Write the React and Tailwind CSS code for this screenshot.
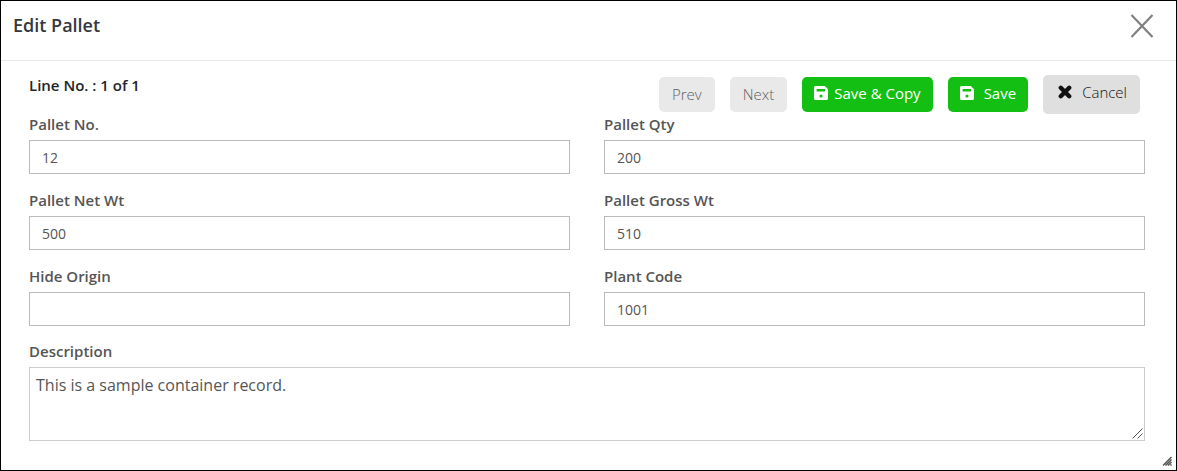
import { useState } from "react";

const fields = [
  { name: "palletNo", label: "Pallet No." },
  { name: "palletQty", label: "Pallet Qty" },
  { name: "netWt", label: "Pallet Net Wt" },
  { name: "grossWt", label: "Pallet Gross Wt" },
  { name: "hideOrigin", label: "Hide Origin" },
  { name: "plantCode", label: "Plant Code" },
];

const CrossIcon = () => (
  <svg width="14" height="14" viewBox="0 0 14 14" fill="none" stroke="currentColor" strokeWidth="4.4" strokeLinecap="round">
    <path d="M2.8 2.8l8.4 8.4M11.2 2.8l-8.4 8.4" />
  </svg>
);

const SaveIcon = () => (
  <svg width="14" height="14" viewBox="0 0 14 14" fill="currentColor">
    <path
      fillRule="evenodd"
      d="M1.5 0H10.8L14 3.2V12.5Q14 14 12.5 14H1.5Q0 14 0 12.5V1.5Q0 0 1.5 0ZM2.6 3V5.6H11V3ZM7 8.4a1.6 1.6 0 1 0 0 3.2a1.6 1.6 0 1 0 0-3.2Z"
    />
  </svg>
);

export default function EditPallet() {
  const [pallet, setPallet] = useState({
    palletNo: "12",
    palletQty: "200",
    netWt: "500",
    grossWt: "510",
    hideOrigin: "",
    plantCode: "1001",
    description: "This is a sample container record.",
  });

  const handleChange = (e) => {
    setPallet({ ...pallet, [e.target.name]: e.target.value });
  };

  return (
    <div className="relative min-h-screen border border-black bg-white font-['Open_Sans',sans-serif] text-[#555]">
      {/* ---------------- HEADER ---------------- */}
      <div className="flex h-[60px] items-start justify-between border-b border-[#e9e9e9] pl-3 pr-[22px] pt-3">
        <h1 className="text-lg font-semibold leading-6 text-[#333840]">Edit Pallet</h1>
        <button type="button" aria-label="Close" className="text-[#808080]">
          <svg width="24" height="26" viewBox="0 0 24 26" fill="none" stroke="currentColor" strokeWidth="2.2">
            <path d="M1.5 2l21 22M22.5 2l-21 22" />
          </svg>
        </button>
      </div>

      <form className="pl-7 pr-[31px] pt-3.5" onSubmit={(e) => e.preventDefault()}>
        {/* ---------------- TOOLBAR ---------------- */}
        <div className="flex items-start justify-between pr-[5px]">
          <p className="text-[15px] font-semibold leading-5 text-[#212529]">Line No. : 1 of 1</p>
          <div className="flex items-center gap-[15px] text-[15px] leading-5">
            <button type="button" disabled className="h-[35px] rounded-[5px] bg-[#e9e9e9] px-[13px] pb-0.5 font-light text-[#606060]">
              Prev
            </button>
            <button type="button" disabled className="h-[35px] rounded-[5px] bg-[#e9e9e9] px-[13px] pb-0.5 font-light text-[#606060]">
              Next
            </button>
            <button type="button" className="flex h-[35px] items-center gap-1.5 rounded-[5px] bg-[#13bf13] px-3 pb-1 text-white">
              <SaveIcon />
              Save &amp; Copy
            </button>
            <button type="submit" className="flex h-[35px] items-center gap-2.5 rounded-[5px] bg-[#13bf13] px-3 pb-1 text-white">
              <SaveIcon />
              Save
            </button>
            <button type="button" className="flex h-[39px] items-center gap-2.5 rounded-[5px] bg-[#dfdfdf] pl-[15px] pr-[13px] pb-1.5 font-light text-[#111]">
              <CrossIcon />
              Cancel
            </button>
          </div>
        </div>

        {/* ---------------- FIELDS ---------------- */}
        <div className="grid grid-cols-2 gap-x-[34px] gap-y-4">
          {fields.map((field) => (
            <div key={field.name}>
              <label htmlFor={field.name} className="mb-1.5 block text-[15px] font-semibold leading-5">
                {field.label}
              </label>
              <input
                id={field.name}
                name={field.name}
                type="text"
                value={pallet[field.name]}
                onChange={handleChange}
                className="block h-[34px] w-full border border-[#bbb] px-3 text-sm"
              />
            </div>
          ))}
        </div>

        <div className="mt-[15px]">
          <label htmlFor="description" className="mb-1.5 block text-[15px] font-semibold leading-5">
            Description
          </label>
          <div className="relative">
            <textarea
              id="description"
              name="description"
              value={pallet.description}
              onChange={handleChange}
              className="block h-[74px] w-full resize-y border border-[#ccc] px-1.5 py-[5px] text-base leading-6 [&::-webkit-resizer]:hidden"
            />
            <svg className="pointer-events-none absolute bottom-0.5 right-0.5" width="11" height="11" viewBox="0 0 11 11" stroke="#555">
              <path d="M0.5 10.5l10-10M5.5 10.5l5-5" />
            </svg>
          </div>
        </div>
      </form>

      {/* dialog resize grip */}
      <svg className="absolute bottom-1 right-1" width="10" height="10" viewBox="0 0 10 10" stroke="#555" strokeWidth="1.5">
        <path d="M1 9.5L9.5 1M3.5 9.5l6-6M6 9.5L9.5 6M8.5 9.5l1-1" />
      </svg>
    </div>
  );
}
